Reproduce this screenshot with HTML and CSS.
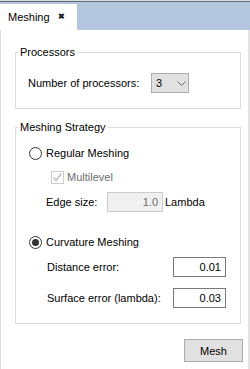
FILE: index.html
```html
<!DOCTYPE html>
<html>
<head>
<meta charset="utf-8">
<link rel="stylesheet" href="styles.css">
</head>
<body>
<div class="window">
  <div class="tabbar">
    <div class="tab">
      <span class="tab-title">Meshing</span>
      <span class="tab-close">&#x2716;</span>
    </div>
  </div>
  <div class="panel">
    <fieldset class="group group-proc">
      <legend>Processors</legend>
      <div class="group-body proc-body">
        <div class="row row-field">
          <span class="proc-label">Number of processors:</span>
          <div class="combo">
            <span class="combo-value">3</span>
            <svg class="chev" width="9" height="6" viewBox="0 0 9 6"><polyline points="0.5,0.5 4.5,4.5 8.5,0.5" fill="none" stroke="#6a6a6a" stroke-width="1"/></svg>
          </div>
        </div>
      </div>
    </fieldset>

    <fieldset class="group group-strategy">
      <legend>Meshing Strategy</legend>
      <div class="group-body strategy-body">
        <div class="row row-option">
          <span class="radio"></span>
          <span class="option-text">Regular Meshing</span>
        </div>
        <div class="row row-check">
          <span class="checkbox">
            <svg width="11" height="11" viewBox="0 0 11 11"><polyline points="1.5,5.5 4,8.5 9.5,1.5" fill="none" stroke="#b8b8b8" stroke-width="1.3"/></svg>
          </span>
          <span class="disabled-text">Multilevel</span>
        </div>
        <div class="row row-field row-edge">
          <span class="edge-label">Edge size:</span>
          <span class="input input-disabled">1.0</span>
          <span class="unit">Lambda</span>
        </div>
        <div class="row row-option row-curv">
          <span class="radio radio-checked"></span>
          <span class="option-text">Curvature Meshing</span>
        </div>
        <div class="row row-field row-dist">
          <span class="field-label">Distance error:</span>
          <span class="input input-num">0.01</span>
        </div>
        <div class="row row-field row-surf">
          <span class="field-label">Surface error (lambda):</span>
          <span class="input input-num">0.03</span>
        </div>
      </div>
    </fieldset>

    <div class="actions">
      <button class="btn">Mesh</button>
    </div>
  </div>
</div>
</body>
</html>
```

FILE: styles.css
```css
html, body {
  margin: 0;
  padding: 0;
  background: #ffffff;
}

body {
  font-family: "Liberation Sans", Arial, sans-serif;
  font-size: 11px;
  color: #000;
}

.window {
  width: 250px;
  height: 369px;
  display: flex;
  flex-direction: column;
  overflow: hidden;
}

.tabbar {
  height: 30px;
  box-sizing: border-box;
  background: linear-gradient(#d2dbe6 0 1px, #686d73 1px 2px, #b3c6de 2px);
  display: flex;
  align-items: flex-end;
}

.tab {
  width: 77px;
  height: 26px;
  background: #fff;
  display: flex;
  align-items: center;
  box-sizing: border-box;
  padding-left: 8px;
}

.tab-title {
  width: 50px;
}

.tab-close {
  font-size: 8px;
  font-weight: bold;
  color: #222;
  line-height: 10px;
}

.panel {
  flex: 1;
  background: #fff;
  border-left: 1px solid #dcdcdc;
  border-right: 2px solid #e3e3e3;
  display: flex;
  flex-direction: column;
}

.group {
  margin: 0 7px 0 14px;
  padding: 0;
  border: 1px solid #dcdcdc;
  min-width: 0;
}

.group legend {
  margin-left: 2px;
  padding: 0 2px;
  line-height: 14px;
  height: 14px;
}

.group-proc {
  margin-top: 15px;
}

.group-strategy {
  margin-top: 11px;
}

.proc-body {
  padding: 14px 12px 15px 12px;
}

.strategy-body {
  padding: 11px 14px 15px 13px;
  display: flex;
  flex-direction: column;
}

.row {
  display: flex;
  align-items: center;
}

.row-option {
  height: 16px;
}

.row-field {
  height: 20px;
}

.proc-label {
  width: 123px;
}

.combo {
  width: 38px;
  height: 20px;
  box-sizing: border-box;
  border: 1px solid #adadad;
  background: #e1e1e1;
  display: flex;
  align-items: center;
  padding-left: 4px;
}

.combo-value {
  width: 21px;
}

.chev {
  margin-top: 1px;
}

.radio {
  width: 13px;
  height: 13px;
  box-sizing: border-box;
  border: 1px solid #333;
  border-radius: 50%;
  background: #fff;
  margin-right: 4px;
  display: flex;
  align-items: center;
  justify-content: center;
}

.radio-checked::after {
  content: "";
  width: 7px;
  height: 7px;
  border-radius: 50%;
  background: #333;
}

.row-check {
  height: 16px;
  margin-top: 8px;
  padding-left: 22px;
}

.checkbox {
  width: 13px;
  height: 13px;
  box-sizing: border-box;
  border: 1px solid #cccccc;
  background: #fff;
  margin-right: 3px;
  display: flex;
  align-items: center;
  justify-content: center;
}

.disabled-text {
  color: #6d6d6d;
}

.row-edge {
  margin-top: 7px;
  padding-left: 17px;
}

.edge-label {
  width: 61px;
}

.input {
  height: 20px;
  box-sizing: border-box;
  display: flex;
  align-items: center;
  justify-content: flex-end;
  padding-right: 4px;
}

.input-disabled {
  width: 56px;
  background: #f0f0f0;
  border: 1px solid #cccccc;
  color: #6d6d6d;
  margin-right: 2px;
}

.input-num {
  width: 53px;
  margin-left: auto;
  background: #fff;
  border: 1px solid #7a7a7a;
}

.row-curv {
  margin-top: 22px;
}

.row-dist {
  margin-top: 7px;
  padding-left: 18px;
}

.row-surf {
  margin-top: 11px;
  padding-left: 18px;
}

.actions {
  display: flex;
  justify-content: flex-end;
  margin-top: 15px;
  padding-right: 5px;
}

.btn {
  width: 59px;
  height: 23px;
  box-sizing: border-box;
  border: 1px solid #adadad;
  background: #e1e1e1;
  font-family: "Liberation Sans", Arial, sans-serif;
  font-size: 11px;
  color: #000;
  padding: 0;
  margin: 0;
}
```
